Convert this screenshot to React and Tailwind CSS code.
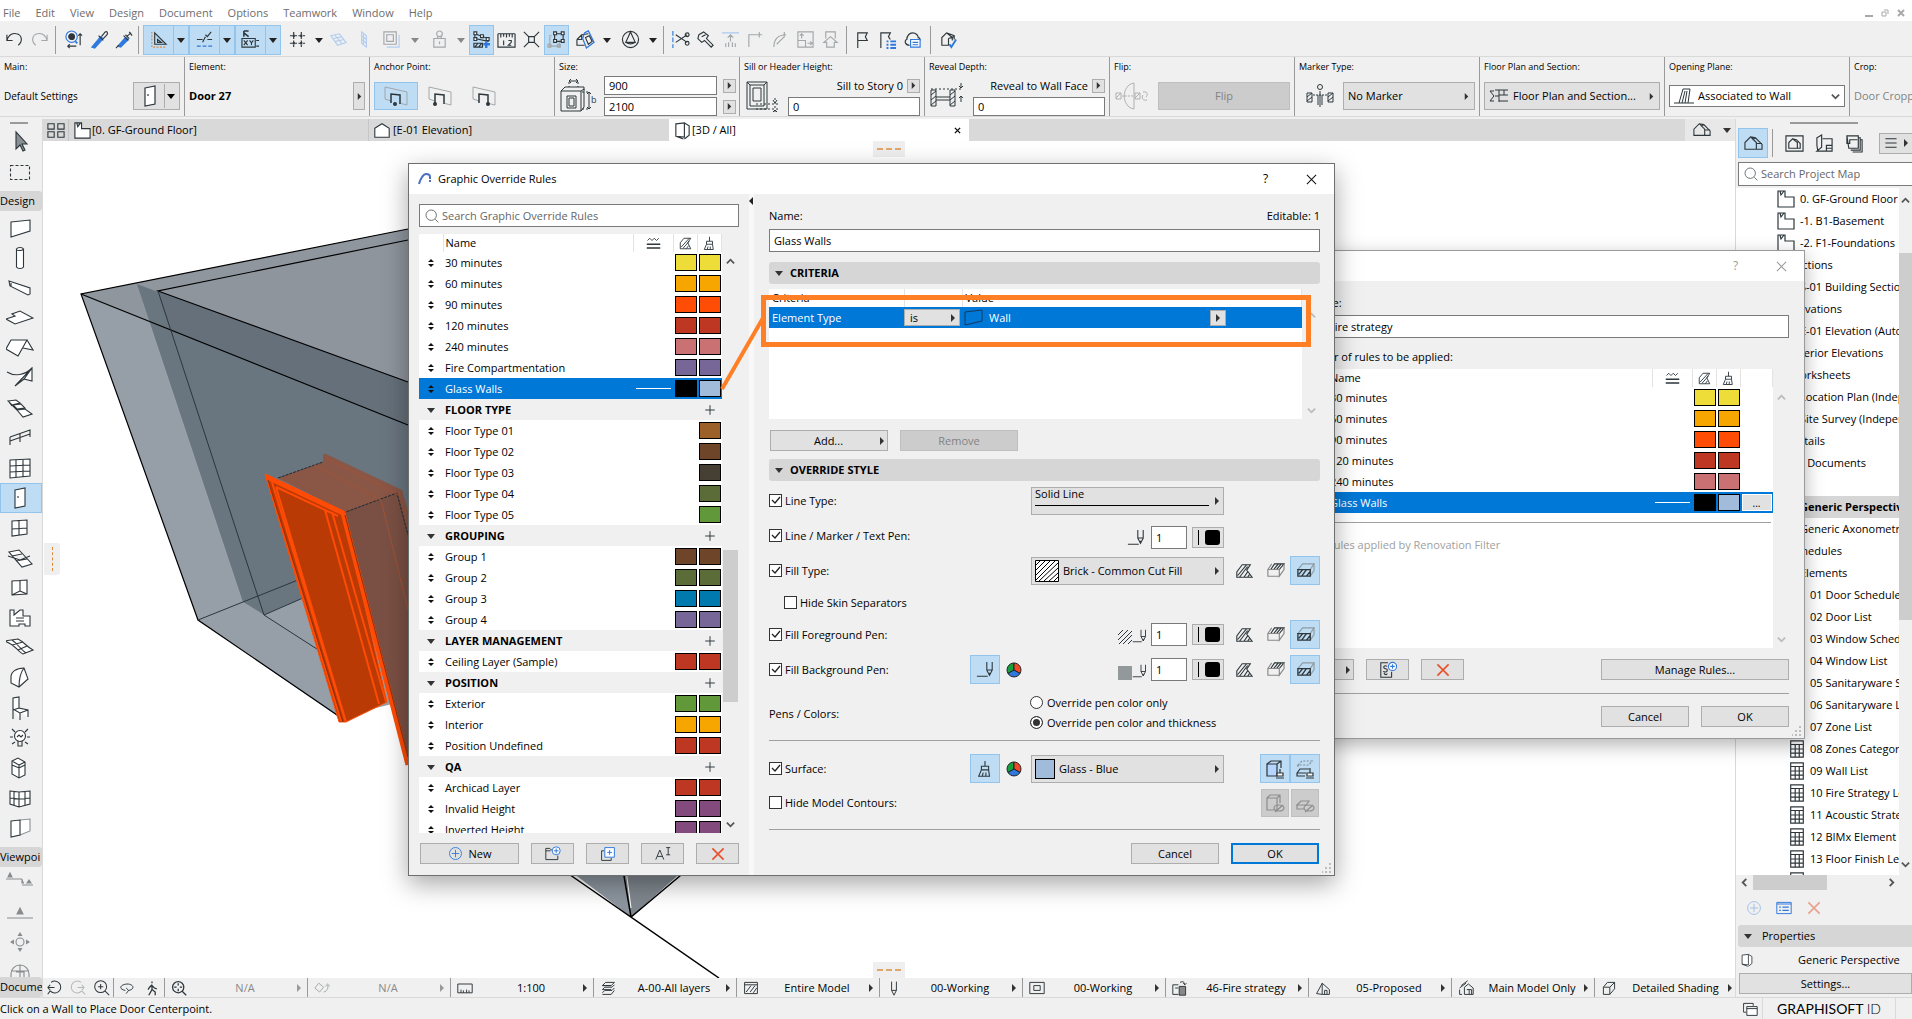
import { useId } from 'react'
import clsx from 'clsx'

const INK = '#2d363b'
const BLUE = '#2f78dd'
const DIM = '#a3a7a9'

// 20x20 glyphs used in toolbars, dialogs and the status strip
const ICONS = {
  undo: <path d="M2 5v6h6M2 11C4 5 8 3 12 4c6 1 7 8 2 12" />,
  redo: <path stroke={DIM} d="M18 5v6h-6M18 11C16 5 12 3 8 4c-6 1-7 8-2 12" />,
  find: <><circle cx="8" cy="7" r="6" stroke={BLUE} /><circle cx="8" cy="7" r="3" fill={INK} /><path stroke={BLUE} strokeWidth="2" d="M12 12l2 2" /><path d="M17 4v12M15 6l2-2 2 2M4 17h9M6 15l-2 2 2 2" /></>,
  pick: <><path d="M2 18l9-11 3 2-9 10z" fill={BLUE} stroke={BLUE} /><path d="M9 6l5 5M12 7l4-5c2-1 3 1 2 3l-4 4" /></>,
  inject: <><path d="M3 17l8-9 3 2-8 8z" fill={BLUE} stroke={BLUE} /><path d="M1 19l3-3M9 6l5 5M12 7l5-4M15 2l3 4M11 5l4 4" /></>,
  triangle: <><path d="M6 3v12h12zM9 10v3h4z" /><path stroke="#e08a3c" strokeDasharray="2 1.5" d="M3 2v16h15" /></>,
  guide: <><path d="M2 10h6M13 10h5M8 13l3-6M11 5l2 2 4-5" /><path stroke={BLUE} strokeDasharray="4 2" d="M2 17h16" /></>,
  coords: <><path strokeWidth="1.600" d="M3 1v6M3 1h5M3 3l5 4" /><path d="M1 9h14v9H1zM3 11l4 5M7 11l-4 5M9 11l2 2.500 2-2.500M11 13.500V16M16 11h3M16 17h3" /></>,
  grid: <><path d="M6 2v16M14 2v16M2 6h16M2 14h16" strokeDasharray="3 1.500" /><path strokeWidth="2.500" d="M5 6h2M13 6h2M5 14h2M13 14h2" /></>,
  planeH: <path stroke="#b3cdf0" d="M2 6l9-2 7 9-9 3zM5 9l9-2M7 12l9-2M6 5l8 10" />,
  planeV: <path stroke="#b3cdf0" d="M7 2l5 4v12l-5-4zM7 6l5 4M7 10l5 4M9 4v12" />,
  sheets: <><path stroke="#b3cdf0" d="M5 18h13V5" /><path stroke={DIM} d="M2 2h13v13H2zM5 5h7v7H5z" /></>,
  stamp: <path stroke={DIM} d="M4 9h12v9H4zM8 9V7M12 9V7M10 1a3 3 0 100 6 3 3 0 000-6M10 12v3" />,
  editsel: <><path d="M3 4l14 5v3L3 9z" /><path fill="#fff" d="M2 2h3v3H2zM9 5h3v3H9zM15 8h3v3h-3zM2 8h3v3H2z" /><path d="M2 14h9v4H2zM3 18l3-4M7 18l3-4" /><path stroke={BLUE} strokeWidth="2.500" d="M15 12v7M12 15h7" /></>,
  ruler: <path d="M1 4v14h18V4M4 4v4M7 4v3M10 4v4M13 4v3M16 4v4M1 4h18M7 11v5M12 11h3v2l-3 3h3" />,
  snap: <path d="M7 7h6v6H7zM2 2l5 5M18 2l-5 5M2 18l5-5M18 18l-5-5" />,
  group: <><path d="M8 4h9v8H8z" /><path fill="#fff" d="M7 2h3v3H7zM15 2h3v3h-3zM7 10h3v3H7zM15 10h3v3h-3z" /><path stroke={DIM} d="M3 7v10h10v-4M2 6h3M1 15h3v3H1zM11 15h3v3h-3z" /></>,
  rotbox: <><path d="M1 10l5-5 7-1M1 10v6h8M6 5v5H1" /><path stroke={BLUE} strokeWidth="1.300" d="M9 3l4-2 6 12-8 6-4-10z" /><path d="M10 8l4-2 3 6-4 3z" /></>,
  orbit: <><circle cx="10" cy="10" r="8.500" /><path d="M10 2l5 11H5zM5 13c3 2 7 2 10 0" /></>,
  split: <><path stroke={BLUE} d="M2 1v18" strokeDasharray="5 2" /><path d="M5 5l12 8M5 13l12-8" /><circle cx="17" cy="5" r="2" /><circle cx="17" cy="14" r="2" /></>,
  adjust: <path d="M3 5l5-3 5 4-2 3 7 7-2 2-7-7-3 2-4-4z M6 7l4-2" />,
  trim: <><path stroke="#b3cdf0" strokeWidth="1.500" d="M1 3h18" /><path stroke={DIM} d="M10 12V5M7 8l3-3 3 3M5 18v-4M8 18v-5M12 18v-5M15 18v-4" /></>,
  corner: <path stroke={DIM} d="M3 18V5h14M14 2v6" />,
  fillet: <path stroke={DIM} d="M3 18C3 10 7 5 16 5M14 2v6M6 15l8-8" />,
  resize: <path stroke={DIM} d="M2 2h16v16H2zM2 11h8v7M6 9V4M4 6l2-2 2 2M12 14h5M15 12l2 2-2 2" />,
  upbox: <path stroke={DIM} d="M10 7l7 6h-3v5H6v-5H3zM5 9V2h10v7" />,
  flag: <path d="M5 19V3h10l-2 4 2 4H5" />,
  flaglist: <><path d="M3 19V3h10l-2 4 2 3" /><path stroke={BLUE} strokeWidth="2" d="M9 12h2M13 12h6M9 15.500h2M13 15.500h6M9 19h2M13 19h6" /></>,
  cloudlist: <><path d="M7 16c-5 0-6-5-3-6 0-4 3-7 6-7 4 0 6 3 6 5 2 0 2 2 2 3" /><path stroke={BLUE} fill="#fff" d="M8 10h10v8H8z" /><path stroke={BLUE} d="M10 13h6M10 15.500h6" /></>,
  housecheck: <><path d="M3 16V8l5-5 8 3v4M3 8v8h7V9M8 3l6 5v3M10 9l6-2" /><path stroke={BLUE} strokeWidth="2" d="M11 15l2 3 5-8" /></>,
  house3d: <path d="M1 16V9l6-6 6 6v7zM7 3l5 1 7 7v5h-6M13 10h6M12 4L9 6" />,
  housebox: <><path d="M1 2h18v16H1z" /><path d="M4 15V9l4-4 5 4v6zM8 5l4 1 4 4v5h-3" /></>,
  layout: <path d="M3 18L2 12V4l5-3v13l-5 4h16V5H8M12 18v-6h6M12 15h6" />,
  publish: <path d="M2 2h12v13H4zM2 2v8h3V6h8M14 4h2v13H6M16 6h2v13H8" />,
  tiles: <path d="M1 3h7v6H1zM12 3h7v6h-7zM1 12h7v6H1zM12 12h7v6h-7z" />,
  story: <path fill="#fff" d="M2 2h7v6h9v10H2zM4 2l1 4 3-4" />,
  elevation: <path fill="#fff" d="M2 8l8-5 8 5v10H2z" />,
  box3d: <path fill="#fff" d="M3 3l9-1v15l-9-1zM12 2l5 3v10l-5 4M3 16l8 3" />,
  hatch: <path d="M3 17V9l5-6h9l-4 6 4 8zM4 15L15 3M7 16l8-9M11 17l3-4" />,
  lines: <><path d="M2 6l3-3 3 3 3-3 3 3 3-3" /><path strokeWidth="2" d="M1 11h18M1 16h18" /></>,
  brush: <path d="M10 1v6M6 7h8v4H6zM6 11l-3 7h12l-1-7M7 18l1-4M11 18v-4" />,
  pencil: <path d="M1 17h12M12 1v9l3 6 3-6V1M12 10h6M15 16v-3" />,
  pentool: <path d="M7 2v11l3 6 3-6V2M7 13h6" />,
  fillA: <path d="M2 17V11l6-8h9l-4 6 6 8zM3 15L13 3M5 17l9-12M10 17l4-6M14 17l2-3" />,
  fillB: <><path d="M5 9L9 3h10l-5 6zM8 9l5-6M11 9l5-6" strokeWidth="1.200" /><path stroke="#888" d="M2 9h12v7H2zM14 9v7l5-7V3M2 9l4-6" /></>,
  fillC: <><path stroke="#8e9ba3" d="M2 9l5-6h12l-4 6zM15 16l4-6V3" /><path d="M2 9h13v7H2zM3 14l4-5M6 16l5-7M11 16l4-5" strokeWidth="1.400" /></>,
  surfA: <><path fill="#b5d5ff" d="M2 5h10v12H2z" /><path fill="none" d="M2 5l4-3h10v7M12 5l4-3" /><path fill="#fff" d="M15 10v4M12 14h6v3h-6zM11 19h8" /></>,
  surfB: <><path stroke="#7f929c" strokeDasharray="2 1.500" d="M3 6l4-4h10l-3 4zM3 6v3" /><path d="M2 14l3-4h9M2 14v3h8M2 14h9" /><path fill="#fff" d="M15 9v5M12 14h6v3h-6zM11 19h8" /></>,
  hideA: <path stroke="#8d8d8d" d="M2 5h10v12H2zM2 5l3-3h10v8M12 5l3-3M10 19l8-7M14 12a5 3 0 100 6 5 3 0 000-6" />,
  hideB: <path stroke="#8d8d8d" d="M2 12l4-4h8l-3 4zM2 12v4h7M10 19l8-7M14 12a5 3 0 100 6 5 3 0 000-6" />,
  plus: <path d="M10 4v12M4 10h12" />,
  addcircle: <g stroke={BLUE}><circle cx="10" cy="10" r="8" /><path d="M10 5v10M5 10h10" /></g>,
  folderadd: <><path d="M11 5H8L6 3H1v14h15v-5M1 6h6" /><g stroke={BLUE} fill="#fff"><circle cx="14" cy="6" r="5" /><path d="M14 3v6M11 6h6" /></g></>,
  dupe: <><path d="M5 6H2v12h12v-3" /><path stroke={BLUE} fill="#fff" d="M6 2h12v12H6z" /><path stroke={BLUE} d="M12 5v6M9 8h6" /></>,
  rename: <path d="M1 17L6 5l5 12M3 13h6M14 2h5M14 11h5M16.500 2v9" />,
  remove: <path stroke="#e8502c" strokeWidth="2" d="M3 3l14 14M17 3L3 17" />,
  paragraph: <><path d="M10 2H2v16h12v-6M9 6c-3-2-5 1-3 2s4 1 3 3-4 1-4 0M6 13c-1 2 3 3 3 1" /><g stroke={BLUE} fill="#fff"><circle cx="15" cy="6" r="4.500" /><path d="M15 3.500v5M12.500 6h5" /></g></>,
  search: <><circle cx="9" cy="9" r="6.500" /><path d="M14 14l4 4" /></>,
  burger: <path strokeWidth="1.600" d="M2 4h16M2 10h16M2 16h16" />,
  sheetgrid: <path strokeWidth="1.300" fill="#fff" d="M3 1h14v18H3zM8 5v14M12.500 5v14M3 5h14M3 10h14M3 14.500h14" />,
  list: <><path stroke={BLUE} d="M1 3h18v14H1zM1 5h18" /><path stroke={BLUE} strokeWidth="1.500" d="M4 9h2M8 9h8M4 13h2M8 13h8" /></>,
  stack: <path fill="#fff" d="M2 3h12v3M2 3v11h3M6 7h13v11H6zM6 9.500h13" />,
  zoomback: <path d="M2 10h8M2 10l3-3M2 10l3 3M6 4a7 7 0 11-1 10M5 14l-3 4" />,
  zoomfwd: <path stroke="#b5b7b8" d="M18 10h-8M18 10l-3-3M18 10l-3 3M14 4a7 7 0 10 1 10M15 14l4 4" />,
  zoomin: <path d="M9 2a7 7 0 100 14A7 7 0 009 2M14 14l5 5M9 6v6M6 9h6" />,
  orbit2: <path d="M8 13c-8-1-8-7 2-8 9 0 10 7 2 8M12 13l-3-3M12 13l-3 4" />,
  walk: <path d="M10 2v2M10 6l-3 3-2 3M10 6v6l-4 7M10 12l4 3v4M10 7l3 3 3 1" strokeWidth="1.600" />,
  zoomfit: <path d="M9 2a7 7 0 100 14A7 7 0 009 2M14 14l5 5M9 4v3M9 11v3M4 9h3M11 9h3" strokeWidth="1.600" />,
  rotate: <path stroke={DIM} d="M6 4l6 5-5 6-6-5zM12 15c5-1 6-5 5-9M14 8l3-3 3 3" />,
  scale: <path d="M1 5h18v11H1zM5 16v-4M8 16v-3M12 16v-4M15 16v-3" />,
  layers: <path d="M3 7l4-4h11l-4 4zM3 12l3-3h9l3-3M3 16l3-3h9l3-3M3 7h11M3 12h11M3 18h11l4-5" />,
  model: <path d="M2 3h16v14H2zM2 6h16M4 15l6-8M9 15l6-8M13 16l4-6" />,
  frame: <path d="M1 3h18v14H1zM6 7h8v6H6z" />,
  override: <><path d="M8 6H1v12h7M4 10h4M10 3c4-2 6 0 6 3M14 4l2 2 2-2" /><path fill="#888" d="M9 8h8v11H9z" /></>,
  reno: <path d="M2 17l7-13v14zM9 4l9 8v6H9M12 18v-5h3v5" />,
  design: <path d="M2 10l8-6M4 7l8-6M8 9l5-4 6 5v8H8zM11 12h6v6M14 12v6M2 12v6h3" />,
  shading: <path d="M3 9h8v9H3zM3 9l5-6h9l-6 6M17 3v8l-6 7" />,
}

function Icon({ name, className = 'size-5' }) {
  return (
    <svg viewBox="0 0 20 20" fill="none" stroke={INK} strokeWidth="1.2" className={clsx('shrink-0', className)} aria-hidden="true">
      {ICONS[name]}
    </svg>
  )
}

// 28x28 glyphs of the left toolbox
const TOOLS = {
  arrow: <path fill="#8a8f92" d="M10 4v17l4-4 3 6 2-1-3-6h5z" />,
  marquee: <path strokeDasharray="3 2" d="M4.500 7.500h19v14h-19z" />,
  wall: <path fill="#fff" d="M5 8l19-2v11L5 23z" />,
  column: <path fill="#fff" d="M10.500 5v18c1 2 6 2 7 0V5c-1-2-6-2-7 0s6 2 7 0" />,
  beam: <path fill="#fff" d="M3 7l21 7v6l-2 1L4 12zM5 12V9" />,
  slab: <path fill="#fff" d="M0 15l9-3-3-2 8-3 13 7-18 6z" />,
  roof: <path fill="#fff" d="M5 6h16l-9 16-12-7zM21 6l6 10-10-2" />,
  shell: <path fill="#fff" d="M1 8c8 5 18 3 25-4v13l-8-2M26 4l-8 11-9 7z" />,
  stair: <path fill="#fff" d="M2 7l8-1 4 3-8 2zM7 11l8-1 4 4-8 1zM11 16l8-1 7 5-9 3zM6 11l5 5M3 8l3 4" />,
  railing: <path d="M4 13l20-7v7M4 13v8M14 10v8M4 17l20-7" />,
  curtain: <path fill="#fff" d="M4 6l20-1v17L4 24zM10 6v17M17 5v18M4 12l20-1M4 18l20-1" />,
  door: <path fill="#fff" d="M9 6l10-2v18L9 24zM12 14v-2" />,
  window: <path fill="#fff" d="M6 7l15-1v14L6 22zM13 6v15M6 15l15-1" />,
  skylight: <path fill="#fff" d="M3 8l10-2 13 14-10 3zM6 12l10-2M10 17l11-2M2 12l12 4 10-4" />,
  opening: <path fill="#fff" d="M6 7l15-1v14L6 21zM14 6v11l-8 4M14 17l7 3" />,
  zone: <path fill="#fff" d="M4 6h4v5l6-5h3v6h7v10h-5v-2h-6v2H4zM10 14h8M10 17h8" />,
  mesh: <path fill="#fff" d="M-2 7l14-2c6 3 9 8 15 11l-10 4C12 18 8 9-2 7zM6 6c6 4 8 9 14 13M6 11l11-3M12 16l9-4" />,
  morph: <path fill="#fff" d="M5 13c0-5 5-9 13-9l4 11-9 8-8-4zM18 4c-4 5-5 12-5 19" />,
  chair: <path fill="#fff" d="M7 15V4l6-1v11l9 2v7M7 15v10M7 15l7 4v7M14 19l8-3M13 14l-6 2" />,
  lamp: <><circle cx="14" cy="12" r="5.500" fill="#fff" /><path d="M12 17v5h4v-5M11 13l2-2 2 2 2-2M4 13h3M21 13h3M6 5l3 3M22 5l-3 3M6 20l3-2M22 20l-3-2" /></>,
  object: <path fill="#fff" d="M6 7l6-3 7 4v13l-6 3-7-4zM6 7l7 4v13M13 11l6-3M6 11l7 3 6-3" />,
  cwall: <path fill="#fff" d="M4 7l9 1 11-1v13l-11 3-9-3zM13 8v15M8 8v13M19 8v13M4 14l9 1 11-1" />,
  panel: <><path stroke="#8c9295" fill="#fff" d="M14 6l10-1v12l-10 4" /><path fill="#fff" d="M5 7l9-1v15l-9 2z" /></>,
  section: <path stroke="#878c8f" fill="#878c8f" d="M0 11h16M16 11v4h2M16 17h11M2 9l2-4 2 4zM21 15l2-3 2 3z" />,
  elev: <path stroke="#878c8f" fill="#878c8f" d="M1 20h26M11 16l3-6 3 6z" />,
  camera: <><circle cx="14" cy="14" r="4" stroke="#878c8f" /><path stroke="none" fill="#878c8f" d="M11.500 8h5L14 4zM11.500 20h5L14 24zM8 11.500v5L4 14zM20 11.500v5L24 14z" /></>,
  detail: <path stroke="#878c8f" d="M5 20v-4a9 9 0 0118 0v4M5 13h18M14 7v12M10 14h8v5" />,
}

function Tool({ name, active }) {
  return (
    <button
      aria-label={name}
      className={clsx('flex h-[30px] w-full shrink-0 items-center justify-center pr-[3px]', active && 'border border-[#92c4ec] bg-[#bedcf3]')}
    >
      <svg viewBox="0 0 28 28" fill="none" stroke={INK} strokeWidth="1.1" className="size-7">{TOOLS[name]}</svg>
    </button>
  )
}

function Tri({ dir = 'right', className = 'fill-[#333]' }) {
  const d = { right: 'M2 0v8l4-4z', down: 'M0 2h8L4 7z', left: 'M6 0v8L2 4z' }[dir]
  return <svg viewBox="0 0 8 8" className={clsx('size-2 shrink-0', className)} aria-hidden="true"><path d={d} /></svg>
}

function Chevron({ turn = '', className = 'stroke-[#555]' }) {
  return (
    <svg viewBox="0 0 10 10" fill="none" strokeWidth="2" className={clsx('size-[9px] shrink-0', turn, className)} aria-hidden="true">
      <path d="M1 7l4-4 4 4" />
    </svg>
  )
}

const BTN = 'flex items-center justify-center border border-[#adadad] bg-[#e1e1e1]'
const BOX = 'border border-[#7a7a7a] bg-white px-1 outline-none'
const ON = 'border border-[#92c4ec] bg-[#bedcf3]'

const MENUS = ['File', 'Edit', 'View', 'Design', 'Document', 'Options', 'Teamwork', 'Window', 'Help']

function MenuBar() {
  return (
    <nav className="flex h-[21px] shrink-0 items-end gap-[15px] bg-white px-[3px] text-[#6d6d6d]">
      {MENUS.map((m) => <button key={m}>{m}</button>)}
      <div className="mb-1 ml-auto flex items-center gap-2 pr-1 text-[#a9a9a9]">
        <button aria-label="Minimize" className="mt-1.5 h-[2px] w-2 bg-current" />
        <button aria-label="Restore">
          <svg viewBox="0 0 8 8" className="size-2" fill="none" stroke="currentColor"><path d="M1 3h4v4H1zM3 1h4v4" /></svg>
        </button>
        <button aria-label="Close">
          <svg viewBox="0 0 8 8" className="size-2" stroke="currentColor" strokeWidth="2"><path d="M1 1l6 6M7 1L1 7" /></svg>
        </button>
      </div>
    </nav>
  )
}

function TB({ name, w = 'w-[25px]', on }) {
  return (
    <button aria-label={name} className={clsx('flex h-[30px] shrink-0 items-center justify-center', w, on && ON)}>
      <Icon name={name} className="size-[19px]" />
    </button>
  )
}

function Drop({ w = 'w-3', dim }) {
  return (
    <button aria-label="Options" className={clsx('flex h-[30px] shrink-0 items-center justify-center', w)}>
      <Tri dir="down" className={dim ? 'fill-[#888]' : 'fill-[#222]'} />
    </button>
  )
}

function Pair({ name }) {
  return (
    <div className={clsx('flex', ON)}>
      <button aria-label={name} className="flex h-7 w-[29px] items-center justify-center"><Icon name={name} className="size-[19px]" /></button>
      <button aria-label={`${name} options`} className="flex h-7 w-[15px] items-center justify-center border-l border-[#92c4ec]">
        <Tri dir="down" className="fill-[#222]" />
      </button>
    </div>
  )
}

const Sep = ({ m = 'mx-[3px]' }) => <div className={clsx('h-7 w-px shrink-0 bg-[#9a9a9a]', m)} />

function Toolbar() {
  return (
    <div className="flex h-9 shrink-0 items-center border-b border-[#d9d9d9] pt-0.5 pl-0.5">
      <TB name="undo" /><TB name="redo" /><Sep />
      <TB name="find" w="w-7" /><TB name="pick" /><TB name="inject" />
      <Sep m="ml-px mr-1" />
      <Pair name="triangle" /><Pair name="guide" /><Pair name="coords" />
      <TB name="grid" w="w-8" /><Drop />
      <TB name="planeH" w="w-[26px]" /><TB name="planeV" w="w-[26px]" />
      <TB name="sheets" w="w-7" /><Drop w="w-5" dim />
      <TB name="stamp" w="w-7" /><Drop w="w-4" dim />
      <TB name="editsel" on /><TB name="ruler" /><TB name="snap" /><TB name="group" on />
      <TB name="rotbox" w="w-8" /><Drop />
      <TB name="orbit" w="w-[34px]" /><Drop />
      <Sep m="mx-1" />
      {['split', 'adjust', 'trim', 'corner', 'fillet', 'resize', 'upbox'].map((n) => <TB key={n} name={n} />)}
      <Sep />
      {['flag', 'flaglist', 'cloudlist'].map((n) => <TB key={n} name={n} />)}
      <Sep m="mx-[5px]" />
      <TB name="housecheck" />
    </div>
  )
}

function InfoCell({ title, children }) {
  return (
    <section className="w-[185px] shrink-0 border-r border-[#9a9a9a] px-1 last:border-r-0">
      <h2 className="h-[19px] pt-0.5 text-[9px] leading-4">{title}</h2>
      <div className="flex h-10 items-center">{children}</div>
    </section>
  )
}

function Anchor({ on, dot }) {
  return (
    <button aria-label="Anchor" className={clsx('flex h-7 w-11 items-center justify-center', on && ON)}>
      <svg viewBox="0 0 26 24" className="h-6 w-[26px]" fill="none" stroke={INK}>
        <path stroke={DIM} d="M2 15V3l22 5v13l-6-1.500M2 15l6 2" />
        <path strokeWidth="1.500" d="M8 19v-9l9 1v9" />
        <circle cx={dot} cy="20" r="2" fill={INK} stroke="none" />
      </svg>
    </button>
  )
}

const Step = () => <button aria-label="More" className={clsx(BTN, 'h-3.5 w-[13px] shrink-0')}><Tri className="size-[7px] fill-[#333]" /></button>

function InfoBox() {
  return (
    <div className="flex h-[60px] shrink-0 overflow-hidden border-b border-[#d9d9d9]">
      <InfoCell title="Main:">
        <span className="grow text-[10px]">Default Settings</span>
        <button className={clsx(BTN, 'h-7 w-[47px]')} aria-label="Door settings">
          <svg viewBox="0 0 28 28" className="size-7" fill="#fff" stroke={INK} strokeWidth="1.2">{TOOLS.door}</svg>
          <span className="h-6 w-px bg-[#adadad]" />
          <Tri dir="down" className="mx-0.5" />
        </button>
      </InfoCell>
      <InfoCell title="Element:">
        <b className="grow">Door 27</b>
        <button className={clsx(BTN, 'h-7 w-3')} aria-label="Favorites"><Tri className="size-[7px] fill-[#333]" /></button>
      </InfoCell>
      <InfoCell title="Anchor Point:">
        <Anchor on dot={12} /><Anchor dot={8} /><Anchor dot={17} />
      </InfoCell>
      <InfoCell title="Size:">
        <svg viewBox="0 0 38 36" className="h-9 w-[38px] shrink-0" fill="none" stroke={INK}>
          <path d="M2 13h20v20H2zM2 13l4-4h19v3M22 13l3-2v18l-3 4M8 18h9v12H8zM10 20h5v8h-5zM10 3h9M12 1l-2 2 2 2M17 1l2 2-2 2M30 14v17M28 16l2-2 2 2M28 29l2 2 2-2" />
          <path strokeDasharray="2 2" d="M10 4v5M19 4v5M23 14h7M23 31h7" />
          <text x="32" y="25" fontSize="9" stroke="none" fill={INK}>b</text>
        </svg>
        <div className="ml-[7px] flex grow flex-col gap-0.5">
          {['900', '2100'].map((v) => (
            <div key={v} className="flex items-center gap-1.5">
              <input aria-label="Size" defaultValue={v} className={clsx(BOX, 'h-[19px] w-[113px]')} />
              <Step />
            </div>
          ))}
        </div>
      </InfoCell>
      <InfoCell title="Sill or Header Height:">
        <svg viewBox="0 0 36 32" className="h-8 w-9 shrink-0" fill="none" stroke={INK}>
          <path d="M3 2h20v27H3zM6 5h14v21H6zM9 8h8v13H9zM3 2l3 3M23 2l-3 3" />
          <path strokeDasharray="2 2" d="M12 24h22M12 29h22M31 18v14" />
          <path d="M29 20l2 3 2-3M29 32l2-2 2 2" />
        </svg>
        <div className="flex grow flex-col gap-0.5 pl-2">
          <div className="flex h-[19px] items-center justify-end gap-1"><span>Sill to Story 0</span><Step /></div>
          <input aria-label="Sill height" defaultValue="0" className={clsx(BOX, 'h-[19px] w-full')} />
        </div>
      </InfoCell>
      <InfoCell title="Reveal Depth:">
        <svg viewBox="0 0 36 32" className="h-8 w-9 shrink-0" fill="none" stroke={INK}>
          <path d="M2 10h5v16H2zM21 10h5v16h-5zM7 17h14M7 20h14M2 15l5-4M2 20l5-4M2 25l5-4M21 15l5-4M21 20l5-4M21 25l5-4" />
          <path strokeDasharray="2 2" d="M2 9h31" />
          <path d="M32 3v5M30 6l2 2 2-2M32 22v-6M30 18l2-2 2 2" />
        </svg>
        <div className="flex grow flex-col gap-0.5 pl-2">
          <div className="flex h-[19px] items-center justify-end gap-1"><span>Reveal to Wall Face</span><Step /></div>
          <input aria-label="Reveal depth" defaultValue="0" className={clsx(BOX, 'h-[19px] w-full')} />
        </div>
      </InfoCell>
      <InfoCell title="Flip:">
        <svg viewBox="0 0 36 30" className="mr-2 h-[30px] w-9 shrink-0" fill="none" stroke="#b0b0b0">
          <path d="M20 2C7 4 7 26 20 28zM2 12h5v6H2zM21 12h5v6h-5zM2 17l5-5M21 17l5-5M29 11c5-1 5 3 3 5M33 19c-4 1-6-2-4-5" />
          <path strokeDasharray="2 1" d="M8 15h12" />
        </svg>
        <button disabled className="h-7 grow border border-[#bfbfbf] bg-[#cccccc] text-[#838383]">Flip</button>
      </InfoCell>
      <InfoCell title="Marker Type:">
        <svg viewBox="0 0 30 26" className="mr-2 ml-1.5 h-[26px] w-[30px] shrink-0" fill="none" stroke={INK}>
          <path d="M2 10h5v9H2zM23 10h5v9h-5zM2 14l5-4M2 18l5-4M23 14l5-4M23 18l5-4M13 12v10M17 12v10M15 8v16" />
          <path strokeDasharray="2 1" d="M8 12h14" /><circle cx="15" cy="4" r="2.500" />
        </svg>
        <button className={clsx(BTN, 'h-7 grow px-1')}><span className="grow text-left">No Marker</span><Tri className="size-[7px] fill-[#333]" /></button>
      </InfoCell>
      <InfoCell title="Floor Plan and Section:">
        <button className={clsx(BTN, 'h-7 w-full gap-1 px-1')}>
          <svg viewBox="0 0 20 16" className="h-4 w-5 shrink-0" fill="none" stroke={INK}><path d="M1 3h4M1 3l4 5-4 5M1 13h4M6 2h13M10 2v12M15 2v5h4M6 8h4M10 13h9M15 7h-5" /></svg>
          <span className="grow text-left whitespace-nowrap">Floor Plan and Section...</span>
          <Tri className="size-[7px] fill-[#333]" />
        </button>
      </InfoCell>
      <InfoCell title="Opening Plane:">
        <div className="flex h-[22px] w-full items-center border border-[#7a7a7a] bg-white px-1">
          <svg viewBox="0 0 20 16" className="h-4 w-5 shrink-0" fill="none" stroke={INK}><path d="M0 15h20M5 15L9 1h7l-2 14M8 15l3-12M11 15l2-12" /></svg>
          <select aria-label="Opening plane" className="grow appearance-none bg-transparent pl-1 outline-none">
            <option>Associated to Wall</option>
          </select>
          <Chevron turn="rotate-180" />
        </div>
      </InfoCell>
      <InfoCell title="Crop:">
        <span className="whitespace-nowrap text-[#838383]">Door Cropping</span>
      </InfoCell>
    </div>
  )
}

const DESIGN_TOOLS = ['wall', 'column', 'beam', 'slab', 'roof', 'shell', 'stair', 'railing', 'curtain', 'door', 'window', 'skylight', 'opening', 'zone', 'mesh', 'morph', 'chair', 'lamp', 'object', 'cwall', 'panel']

const ToolHead = ({ children }) => (
  <h3 className="h-5 shrink-0 overflow-hidden rounded-r-[3px] bg-[#d6d6d6] leading-5 whitespace-nowrap">{children}</h3>
)

function Toolbox() {
  return (
    <aside className="flex w-[43px] shrink-0 flex-col overflow-hidden border-r border-[#d9d9d9]">
      <div className="mt-[3px] mb-[3px] ml-2.5 h-0.5 w-[18px] shrink-0 bg-[#9a9a9a]" />
      <Tool name="arrow" />
      <Tool name="marquee" />
      <div className="h-1 shrink-0" />
      <ToolHead>Design</ToolHead>
      <div className="h-0.5 shrink-0" />
      {DESIGN_TOOLS.map((t) => <Tool key={t} name={t} active={t === 'door'} />)}
      <div className="h-1 shrink-0" />
      <ToolHead>Viewpoi</ToolHead>
      <div className="flex min-h-0 grow flex-col overflow-hidden">
        {['section', 'elev', 'camera', 'detail'].map((t) => <Tool key={t} name={t} />)}
      </div>
      <ToolHead>Docume</ToolHead>
    </aside>
  )
}

function TabBar() {
  return (
    <div className="flex h-[22px] shrink-0 items-stretch bg-[#d9d9d9]">
      <button aria-label="Tab overview" className="flex w-[26px] items-center justify-center border-r border-[#c6c6c6]"><Icon name="tiles" className="size-[18px]" /></button>
      <button className="flex w-[300px] items-center border-r border-[#c6c6c6] px-1"><Icon name="story" className="size-[19px]" />[0. GF-Ground Floor]</button>
      <button className="flex w-[300px] items-center gap-0.5 px-1"><Icon name="elevation" className="size-[18px]" />[E-01 Elevation]</button>
      <div className="flex w-[300px] items-center bg-white px-1">
        <button className="flex grow items-center"><Icon name="box3d" className="size-[19px]" />[3D / All]</button>
        <button aria-label="Close tab" className="px-1">
          <svg viewBox="0 0 8 8" className="size-[7px]" stroke="#111" strokeWidth="1.6"><path d="M1 1l6 6M7 1L1 7" /></svg>
        </button>
      </div>
      <button aria-label="Navigator views" className="ml-auto flex w-[50px] items-center justify-between bg-[#e8e8e8] pr-1 pl-2">
        <Icon name="house3d" className="size-[18px]" /><Tri dir="down" />
      </button>
    </div>
  )
}

// Perspective of the glass wall with the selected door; drawn in canvas coordinates
function Scene() {
  return (
    <svg className="absolute top-0 left-0 h-[837px] w-[700px]" viewBox="43 141 700 837" fill="none">
      <path fill="#969fa8" d="M81 294L408 229V700L340 717 198 620z" />
      <path fill="#8f969e" d="M81 294L408 229V425z" />
      <path fill="#69757f" d="M137 284l21 8 250 90v210L303 598l-39 17-21-13z" />
      <path fill="#65707a" d="M158 291l250 91v43L170 330z" />
      <path fill="#8f959d" d="M158 291L408 240V382z" />
      <path fill="#969fa8" d="M198 620l45-18 21 13 39-17 20 54 20 68z" />
      <g stroke="#000" strokeWidth="1.2">
        <path d="M408 229L81 294 198 620 340 717" />
        <path d="M408 240L158 291 408 382M81 294L408 425" />
      </g>
      <path stroke="#2c363e" d="M158 291L264 615 303 598M198 620L303 578M264 615L320 651" />
      <path fill="#8a5646" d="M278 478l45-16v-8h3l76 36 7 25v250L343 511z" />
      <path fill="#7b5044" d="M343 513l54-20 11 40v230z" />
      <path stroke="#1f2a33" strokeDasharray="3 1" d="M278 478L323 462M343 513l54-20 11 42" />
      <path stroke="#a0543a" d="M314 465l67 35 27 110M326 458l73 37" />
      <path fill="#b93a04" stroke="#ff5208" d="M265 474l78 37 44 191-41 20h-7z" />
      <path stroke="#ff4b05" strokeWidth="5" d="M267 477L343 513 408 765" />
      <path stroke="#ff4b05" strokeWidth="2" d="M266 475L341 721M271 479L345 720M276 487l62 29M325 510L379 704M332 512L386 702M276 487L346 722" />
      <path stroke="#8c2f08" d="M268 480L343 722M345 515L408 757" />
      <path fill="#8d969f" d="M569 870L631 917 624 870z" />
      <path fill="#7f878e" d="M624 870L631 917 684 870z" />
      <path stroke="#000" strokeWidth="1.500" d="M563 870L631 917 687 870M623 870L631 917 719 978" />
      <path stroke="#fff" d="M626 870L631 908" />
    </svg>
  )
}

function Canvas() {
  return (
    <main className="relative min-h-0 grow overflow-hidden bg-white">
      <Scene />
      <div className="absolute top-0 left-1/2 -ml-4 flex h-4 w-8 items-center bg-[#efefef] px-1"><i className="w-full border-t-2 border-dashed border-[#e3a56c]" /></div>
      <div className="absolute bottom-0 left-1/2 -ml-4 flex h-4 w-8 items-center bg-[#efefef] px-1"><i className="w-full border-t-2 border-dashed border-[#e3a56c]" /></div>
      <div className="absolute top-[402px] left-px flex h-8 w-4 justify-center rounded-r-[3px] bg-[#efefef] py-1"><i className="h-full border-l border-dashed border-[#e08a3c]" /></div>
    </main>
  )
}

const QUICK = [
  { icon: 'zoomfit', text: 'N/A', dim: true },
  { icon: 'rotate', text: 'N/A', dim: true },
  { icon: 'scale', text: '1:100' },
  { icon: 'layers', text: 'A-00-All layers' },
  { icon: 'model', text: 'Entire Model' },
  { icon: 'pentool', text: '00-Working' },
  { icon: 'frame', text: '00-Working' },
  { icon: 'override', text: '46-Fire strategy' },
  { icon: 'reno', text: '05-Proposed' },
  { icon: 'design', text: 'Main Model Only' },
  { icon: 'shading', text: 'Detailed Shading' },
]

function QuickOptions() {
  return (
    <div className="flex h-[19px] shrink-0 items-center overflow-hidden">
      <div className="flex h-full w-[71px] shrink-0 items-center justify-around border-r border-[#9a9a9a]">
        {['zoomback', 'zoomfwd', 'zoomin'].map((n) => <button key={n} aria-label={n}><Icon name={n} className="size-[17px]" /></button>)}
      </div>
      <div className="flex h-full w-[51px] shrink-0 items-center justify-around border-r border-[#9a9a9a]">
        {['orbit2', 'walk'].map((n) => <button key={n} aria-label={n}><Icon name={n} className="size-4" /></button>)}
      </div>
      {QUICK.map((q) => (
        <button key={q.icon} className={clsx('flex h-full w-[143px] shrink-0 items-center border-r border-[#9a9a9a] pr-1 pl-1.5 last:border-r-0', q.dim && 'text-[#8a8a8a]')}>
          <Icon name={q.icon} className="size-4" />
          <span className="grow pl-2 text-center whitespace-nowrap">{q.text}</span>
          <Tri className={q.dim ? 'fill-[#999]' : 'fill-[#333]'} />
        </button>
      ))}
    </div>
  )
}

const MAP = [
  ['story', 2, '0. GF-Ground Floor'], ['story', 2, '-1. B1-Basement'], ['story', 2, '-2. F1-Foundations'],
  ['folder', 1, 'Sections'], ['', 2, 'S-01 Building Section'], ['folder', 1, 'Elevations'],
  ['', 2, 'E-01 Elevation (Auto-rebuild)'], ['folder', 1, 'Interior Elevations'], ['folder', 1, 'Worksheets'],
  ['', 2, 'Location Plan (Independent)'], ['', 2, 'Site Survey (Independent)'], ['folder', 1, 'Details'],
  ['folder', 1, '3D Documents'], ['', 1, ''], ['bold', 2, 'Generic Perspective'], ['', 2, 'Generic Axonometry'],
  ['folder', 1, 'Schedules'], ['', 2, 'Elements'], ['sheetgrid', 3, '01 Door Schedule'], ['sheetgrid', 3, '02 Door List'],
  ['sheetgrid', 3, '03 Window Schedule'], ['sheetgrid', 3, '04 Window List'], ['sheetgrid', 3, '05 Sanitaryware Schedule'],
  ['sheetgrid', 3, '06 Sanitaryware List'], ['sheetgrid', 3, '07 Zone List'], ['sheetgrid', 3, '08 Zones Categories'],
  ['sheetgrid', 3, '09 Wall List'], ['sheetgrid', 3, '10 Fire Strategy Legend'], ['sheetgrid', 3, '11 Acoustic Strategy'],
  ['sheetgrid', 3, '12 BIMx Element Schedule'], ['sheetgrid', 3, '13 Floor Finish Legend'], ['sheetgrid', 3, ''],
]
const INDENT = { 1: 'pl-[31px]', 2: 'pl-[41px]', 3: 'pl-[52px]' }

function Navigator() {
  return (
    <aside className="flex w-[177px] shrink-0 flex-col overflow-hidden border-l border-[#d9d9d9]">
      <div className="mx-auto mt-[3px] h-0.5 w-[68px] shrink-0 bg-[#9a9a9a]" />
      <div className="flex h-[38px] shrink-0 items-center pl-0.5">
        <TB name="house3d" w="w-[30px]" on />
        <Sep m="ml-1 mr-1.5" />
        <TB name="housebox" w="w-[30px]" /><TB name="layout" w="w-[30px]" /><TB name="publish" w="w-[30px]" />
        <button aria-label="Settings menu" className={clsx(BTN, 'ml-2.5 h-[21px] w-9 shrink-0 gap-1')}><Icon name="burger" className="size-3.5" /><Tri /></button>
      </div>
      <label className="ml-0.5 flex h-6 shrink-0 items-center border border-r-0 border-[#7a7a7a] bg-white px-1">
        <Icon name="search" className="size-4 opacity-70" />
        <input aria-label="Search Project Map" placeholder="Search Project Map" className="w-full min-w-0 pl-0.5 outline-none placeholder:text-[#666]" />
      </label>
      <div className="mt-0.5 flex min-h-0 grow">
        <ul className="min-w-0 grow overflow-hidden bg-white">
          {MAP.map(([icon, level, text], i) => (
            <li key={i} className={clsx('flex h-[22px] items-center whitespace-nowrap', INDENT[level], icon === 'bold' && 'bg-[#d6d6d6] font-bold')}>
              <span className={clsx('flex shrink-0', level === 3 ? 'w-[22px]' : 'w-[23px]')}>
                {icon === 'story' && <Icon name="story" className="-ml-px size-5" />}
                {icon === 'sheetgrid' && <Icon name="sheetgrid" className="size-[18px]" />}
              </span>
              {text}
            </li>
          ))}
        </ul>
        <div className="flex w-[13px] shrink-0 flex-col items-center">
          <div className="flex h-[65px] items-start pt-2"><Chevron /></div>
          <div className="h-[367px] w-full bg-[#cdcdcd]" />
          <div className="mt-auto pb-1.5"><Chevron turn="rotate-180" /></div>
        </div>
      </div>
      <div className="flex h-[15px] shrink-0 items-center pr-4 pl-1">
        <Chevron turn="-rotate-90" />
        <div className="ml-1 h-full w-[74px] bg-[#cdcdcd]" />
        <Chevron turn="rotate-90" className="ml-auto stroke-[#555]" />
      </div>
      <div className="flex h-[35px] shrink-0 items-center gap-[14px] pl-2.5">
        <button aria-label="New" className="opacity-40"><Icon name="addcircle" className="size-4" /></button>
        <button aria-label="Edit list"><Icon name="list" className="size-4" /></button>
        <button aria-label="Delete" className="opacity-50"><Icon name="remove" className="size-4" /></button>
      </div>
      <h3 className="ml-0.5 flex h-[22px] shrink-0 items-center gap-2.5 rounded-l-[3px] bg-[#d6d6d6] pl-1.5"><Tri dir="down" />Properties</h3>
      <div className="flex h-[26px] shrink-0 items-center pl-1"><Icon name="box3d" className="size-3.5" /><span className="pl-11 whitespace-nowrap">Generic Perspective</span></div>
      <button className={clsx(BTN, 'mb-[3px] ml-[3px] h-[21px] shrink-0')}>Settings...</button>
    </aside>
  )
}

const Swatch = ({ c }) => <i className="block h-[17px] w-full border border-black" style={{ background: c }} />

const RULES = [
  ['30 minutes', '#eedd39', '#eedd39'], ['60 minutes', '#f7a600', '#f7a600'], ['90 minutes', '#ff4d06', '#ff4d06'],
  ['120 minutes', '#bd3722', '#bd3722'], ['240 minutes', '#ca7174', '#ca7174'], ['Fire Compartmentation', '#776799', '#776799'],
  ['Glass Walls', '#000000', '#a1bcdb'],
  ['FLOOR TYPE'], ['Floor Type 01', null, '#9b6129'], ['Floor Type 02', null, '#6f4529'], ['Floor Type 03', null, '#453f34'],
  ['Floor Type 04', null, '#5c6c38'], ['Floor Type 05', null, '#60983a'],
  ['GROUPING'], ['Group 1', '#6f4529', '#6f4529'], ['Group 2', '#5c6c38', '#5c6c38'], ['Group 3', '#007aae', '#007aae'], ['Group 4', '#776799', '#776799'],
  ['LAYER MANAGEMENT'], ['Ceiling Layer (Sample)', '#bd3722', '#bd3722'],
  ['POSITION'], ['Exterior', '#60983a', '#60983a'], ['Interior', '#f7a600', '#f7a600'], ['Position Undefined', '#bd3722', '#bd3722'],
  ['QA'], ['Archicad Layer', '#bd3722', '#bd3722'], ['Invalid Height', '#834a7e', '#834a7e'], ['Inverted Height', '#834a7e', '#834a7e'],
]

function Sorter() {
  return <svg viewBox="0 0 8 10" className="mx-auto h-2.5 w-2" aria-hidden="true"><path d="M1 4l3-3 3 3zM1 6h6L4 9z" fill="#111" /></svg>
}

function RuleList() {
  return (
    <div className="flex min-h-0 grow">
      <div className="w-[303px] shrink-0 overflow-hidden bg-white">
        <table className="w-full table-fixed border-collapse">
          <colgroup><col className="w-6" /><col /><col className="w-10" /><col className="w-6" /><col className="w-6" /></colgroup>
          <thead>
            <tr className="h-[18px] text-left">
              <th className="border-r border-[#e3e3e3]" />
              <th className="border-r border-[#e3e3e3] pl-0.5 font-normal">Name</th>
              <th className="border-r border-[#e3e3e3] p-0"><Icon name="lines" className="mx-auto size-[15px]" /></th>
              <th className="border-r border-[#e3e3e3] p-0"><Icon name="hatch" className="mx-auto size-[15px]" /></th>
              <th className="border-r border-[#e3e3e3] p-0"><Icon name="brush" className="mx-auto size-[15px]" /></th>
            </tr>
          </thead>
          <tbody>
            {RULES.map(([name, a, b]) => {
              if (!b) {
                return (
                  <tr key={name} className="h-[21px] bg-[#f0f0f0] font-bold">
                    <td><Tri dir="down" className="mx-auto fill-[#333]" /></td>
                    <td colSpan="3" className="pl-0.5">{name}</td>
                    <td><button aria-label="Add rule" className="mx-auto flex"><Icon name="plus" className="size-4" /></button></td>
                  </tr>
                )
              }
              const sel = name === 'Glass Walls'
              return (
                <tr key={name} className={clsx('h-[21px]', sel && 'bg-[#0078d7] text-white')}>
                  <td className="p-0"><Sorter /></td>
                  <td className="p-0 pl-0.5">{name}</td>
                  <td className="p-0">{sel && <i className="mx-auto block h-px w-[35px] bg-white" />}</td>
                  <td className="p-px">{a && <Swatch c={a} />}</td>
                  <td className="p-px"><Swatch c={b} /></td>
                </tr>
              )
            })}
          </tbody>
        </table>
      </div>
      <div className="flex w-[17px] flex-col items-center pt-[23px]">
        <Chevron />
        <div className="mt-[284px] h-[152px] w-[15px] bg-[#cdcdcd]" />
        <div className="mt-auto pb-1"><Chevron turn="rotate-180" /></div>
      </div>
    </div>
  )
}

function Check({ label, checked, className }) {
  const id = useId()
  return (
    <div className={clsx('flex items-center gap-[3px]', className)}>
      <span className="grid">
        <input id={id} type="checkbox" defaultChecked={checked} className="peer size-[13px] appearance-none border border-[#333] bg-white [grid-area:1/1]" />
        <svg viewBox="0 0 13 13" fill="none" stroke="#222" strokeWidth="1.3" className="pointer-events-none invisible size-[13px] [grid-area:1/1] peer-checked:visible"><path d="M3 6l3 3 5-6" /></svg>
      </span>
      <label htmlFor={id}>{label}</label>
    </div>
  )
}

function Radio({ label, checked }) {
  return (
    <label className="flex h-5 items-center gap-1">
      <input type="radio" name="pens" defaultChecked={checked} className="size-[13px] appearance-none rounded-full border border-[#333] bg-white checked:bg-[#333] checked:shadow-[inset_0_0_0_2px_#fff]" />
      {label}
    </label>
  )
}

const SectionHead = ({ children }) => (
  <h3 className="flex h-[22px] shrink-0 items-center gap-[7px] rounded-[3px] bg-[#d6d6d6] pl-1.5 font-bold"><Tri dir="down" />{children}</h3>
)

function Pen({ kind }) {
  return (
    <div className="flex w-[104px] items-center justify-end">
      {kind === 'hatch' && <svg viewBox="0 0 14 14" className="mt-1 size-3.5 shrink-0" stroke={INK}><path d="M0 5l5-5M0 10L10 0M1 14L14 1M5 14l9-9M10 14l4-4" /></svg>}
      {kind === 'solid' && <i className="mt-1.5 size-3.5 shrink-0 bg-[#93989b]" />}
      <Icon name="pencil" className={kind ? 'mt-1 mr-1 size-[15px]' : 'mr-1.5 size-[18px]'} />
      <input aria-label="Pen" defaultValue="1" className={clsx(BOX, 'h-[23px] w-9 shrink-0')} />
      <button aria-label="Pen color" className={clsx(BTN, 'ml-[5px] h-[21px] w-8 shrink-0 justify-end gap-1.5 pr-[3px]')}>
        <i className="h-[15px] w-px bg-black" /><i className="h-[15px] w-[15px] rounded-[3px] bg-black" />
      </button>
    </div>
  )
}

function Fills() {
  return (
    <div className="flex shrink-0 items-center">
      <button aria-label="Drafting fills" className="flex w-[33px] justify-center"><Icon name="fillA" className="size-[18px]" /></button>
      <button aria-label="Cover fills" className="flex w-[30px] justify-center"><Icon name="fillB" className="size-[19px]" /></button>
      <button aria-label="Cut fills" className={clsx('flex h-[29px] w-[30px] items-center justify-center', ON)}><Icon name="fillC" className="size-[19px]" /></button>
    </div>
  )
}

function ColorMode({ icon }) {
  return (
    <div className="mr-[9px] flex items-center gap-[6px]">
      <button aria-label="By attribute" className={clsx('flex h-[29px] w-[30px] items-center justify-center', ON)}><Icon name={icon} className="size-[18px]" /></button>
      <button aria-label="By RGB">
        <svg viewBox="0 0 16 16" className="size-4" stroke="#222" strokeWidth="1">
          <path fill="#17a03e" d="M8 8V1a7 7 0 00-6 10.500z" /><path fill="#f04a28" d="M8 8V1a7 7 0 016 10.500z" /><path fill="#2f78dd" d="M8 8l-6 3.500a7 7 0 0012 0z" />
        </svg>
      </button>
    </div>
  )
}

const ROW = 'flex h-[35px] shrink-0 items-center justify-between'

function TitleBar({ title, dim }) {
  return (
    <header className="flex h-[30px] shrink-0 items-center bg-white pl-[9px]">
      {title && (
        <svg viewBox="0 0 14 14" className="mr-1.5 size-3.5" fill="none" stroke="#4a6fc4" strokeWidth="2"><path d="M1 12C2 8 5 2 8 2c3 0 4 1 4 3" /><path strokeDasharray="2 1" d="M12 5v5" /></svg>
      )}
      <h1 className="grow text-[11px]">{title}</h1>
      <button className={clsx('w-[45px] text-[12px]', dim && 'text-[#999]')}>?</button>
      <button aria-label="Close" className="flex w-[46px] justify-center">
        <svg viewBox="0 0 12 12" className="size-[11px]" stroke={dim ? '#999' : '#111'} strokeWidth="1.1"><path d="M1 1l10 10M11 1L1 11" /></svg>
      </button>
    </header>
  )
}

const Grip = () => (
  <svg viewBox="0 0 10 10" className="absolute right-0.5 bottom-0.5 size-2.5" fill="#bdbdbd"><path d="M7 0h2v2H7zM7 4h2v2H7zM7 8h2v2H7zM3 4h2v2H3zM3 8h2v2H3zM0 8h1v2H0z" /></svg>
)

function RulesDialog() {
  return (
    <div role="dialog" className="absolute top-[163px] left-[408px] flex h-[713px] w-[927px] flex-col border border-[#6c706f] bg-[#f0f0f0] shadow-[0_8px_24px_rgba(0,0,0,0.35)]">
      <TitleBar title="Graphic Override Rules" />
      <div className="flex min-h-0 grow">
        <div className="flex w-[340px] shrink-0 flex-col py-2.5 pl-2.5">
          <label className="flex h-[23px] w-80 shrink-0 items-center border border-[#7a7a7a] bg-white px-1">
            <Icon name="search" className="size-4 opacity-70" />
            <input aria-label="Search rules" placeholder="Search Graphic Override Rules" className="grow pl-0.5 outline-none placeholder:text-[#666]" />
          </label>
          <div className="h-[7px] shrink-0" />
          <RuleList />
          <div className="mt-2.5 mb-px flex w-80 shrink-0 gap-3 pl-px">
            <button className={clsx(BTN, 'h-[21px] grow gap-1.5')}><Icon name="addcircle" className="size-[15px]" />New</button>
            {['folderadd', 'dupe', 'rename', 'remove'].map((n) => (
              <button key={n} aria-label={n} className={clsx(BTN, 'h-[21px] w-[43px]')}><Icon name={n} className="size-4" /></button>
            ))}
          </div>
        </div>
        <div className="w-[5px] shrink-0 bg-[#f8f8f8] pt-[3px]"><Tri dir="left" className="-ml-0.5 fill-[#222]" /></div>
        <div className="flex min-w-0 grow flex-col pr-[14px] pl-[15px]">
          <div className="flex h-[35px] shrink-0 items-end justify-between pb-[5px]"><label htmlFor="rule">Name:</label><span>Editable: 1</span></div>
          <input id="rule" defaultValue="Glass Walls" className={clsx(BOX, 'mb-2.5 h-[23px] shrink-0')} />
          <SectionHead>CRITERIA</SectionHead>
          <div className="mt-[5px] flex h-[130px] shrink-0">
            <div className="grow bg-white">
              <table className="w-full table-fixed border-collapse">
                <colgroup><col className="w-[135px]" /><col className="w-[58px]" /><col /></colgroup>
                <thead>
                  <tr className="h-[18px] text-left">
                    <th className="border-r border-[#e3e3e3] p-0 pl-[3px] font-normal">Criteria</th>
                    <th className="border-r border-[#e3e3e3]" />
                    <th className="border-r border-[#e3e3e3] p-0 pl-[3px] font-normal">Value</th>
                  </tr>
                </thead>
                <tbody>
                  <tr className="h-[21px] bg-[#0078d7] text-white">
                    <td className="p-0 pl-[3px]">Element Type</td>
                    <td className="p-0"><button className={clsx(BTN, 'h-[17px] w-[56px] pr-0.5 pl-[5px] text-black')}><span className="grow text-left leading-[15px]">is</span><Tri /></button></td>
                    <td className="p-0">
                      <div className="flex items-center">
                        <svg viewBox="0 0 20 17" className="ml-0.5 h-[17px] w-5 shrink-0" fill="none" stroke="#12395e"><path d="M1 3l17-2v11L1 16z" /></svg>
                        <span className="w-[226px] pl-[5px]">Wall</span>
                        <button aria-label="Choose value" className={clsx(BTN, 'size-4 shrink-0')}><Tri /></button>
                      </div>
                    </td>
                  </tr>
                </tbody>
              </table>
            </div>
            <div className="flex w-[18px] shrink-0 flex-col items-center justify-between pt-[22px] pb-1"><Chevron className="stroke-[#bbb]" /><Chevron turn="rotate-180" className="stroke-[#bbb]" /></div>
          </div>
          <div className="flex shrink-0 gap-3 pt-[11px] pb-2 pl-px">
            <button className={clsx(BTN, 'h-[21px] w-[118px] pr-px')}><span className="grow pl-2 text-center">Add...</span><Tri /></button>
            <button disabled className="h-[21px] w-[118px] border border-[#bfbfbf] bg-[#cccccc] text-[#838383]">Remove</button>
          </div>
          <SectionHead>OVERRIDE STYLE</SectionHead>
          <div className="h-0.5 shrink-0" />
          <div className={ROW}>
            <Check label="Line Type:" checked />
            <button className={clsx(BTN, 'mr-24 h-7 w-[193px] pr-0.5 pl-[3px]')}>
              <span className="flex grow flex-col pr-1 text-left leading-3">Solid Line<i className="mt-[5px] mb-2 h-px bg-black" /></span><Tri />
            </button>
          </div>
          <div className={ROW}>
            <Check label="Line / Marker / Text Pen:" checked />
            <div className="mt-1 mr-24"><Pen /></div>
          </div>
          <div className={ROW}>
            <Check label="Fill Type:" checked className="grow" />
            <button className={clsx(BTN, 'mr-[3px] h-7 w-[193px] gap-1 pr-0.5 pl-[3px]')}>
              <svg viewBox="0 0 24 22" className="h-[22px] w-6" stroke="#000"><path fill="#fff" d="M.5.500h23v21H.5z" /><path d="M1 5l4-4M1 10l9-9M1 15L15 1M1 20L20 1M4 21L23 3M9 21L23 8M14 21l9-8M19 21l4-4" /></svg>
              <span className="grow text-left whitespace-nowrap">Brick - Common Cut Fill</span><Tri />
            </button>
            <Fills />
          </div>
          <div className="flex h-[29px] shrink-0 items-center pl-[15px]"><Check label="Hide Skin Separators" /></div>
          <div className={ROW}>
            <Check label="Fill Foreground Pen:" checked className="grow" />
            <div className="mr-[3px] flex justify-end"><Pen kind="hatch" /></div>
            <Fills />
          </div>
          <div className={ROW}>
            <Check label="Fill Background Pen:" checked className="grow" />
            <ColorMode icon="pencil" />
            <div className="mr-[3px] flex w-[193px] justify-end"><Pen kind="solid" /></div>
            <Fills />
          </div>
          <div className="flex h-[53px] shrink-0 items-center justify-between">
            <span>Pens / Colors:</span>
            <div className="w-[290px] pb-0.5"><Radio label="Override pen color only" /><Radio label="Override pen color and thickness" checked /></div>
          </div>
          <hr className="mb-2.5 border-[#a0a0a0]" />
          <div className={ROW}>
            <Check label="Surface:" checked className="grow" />
            <ColorMode icon="brush" />
            <button className={clsx(BTN, 'h-7 w-[193px] gap-1 pr-0.5 pl-[3px]')}>
              <i className="h-5 w-5 border border-black bg-[#a1bcdb]" /><span className="grow text-left">Glass - Blue</span><Tri />
            </button>
            <div className="ml-9 flex">
              {['surfA', 'surfB'].map((n) => <button key={n} aria-label={n} className={clsx('flex h-[29px] w-[30px] items-center justify-center', ON)}><Icon name={n} /></button>)}
            </div>
          </div>
          <div className="flex h-[33px] shrink-0 items-center justify-between">
            <Check label="Hide Model Contours:" />
            <div className="flex gap-0.5 pr-px">
              {['hideA', 'hideB'].map((n) => <button key={n} disabled aria-label={n} className="flex size-7 items-center justify-center border border-[#bfbfbf] bg-[#cccccc]"><Icon name={n} /></button>)}
            </div>
          </div>
          <hr className="mt-2.5 border-[#a0a0a0]" />
          <div className="flex justify-end gap-3 pt-[13px] pr-px">
            <button className={clsx(BTN, 'h-[21px] w-[88px]')}>Cancel</button>
            <button className="h-[21px] w-[88px] border-2 border-[#0078d7] bg-[#e1e1e1] leading-4">OK</button>
          </div>
        </div>
      </div>
      <Grip />
    </div>
  )
}

const APPLIED = [...RULES.slice(0, 5), RULES[6]]

function CombinationsDialog() {
  return (
    <div role="dialog" className="absolute top-[250px] left-[1290px] flex h-[489px] w-[515px] flex-col border border-[#9a9a9a] bg-[#f0f0f0] shadow-[0_6px_18px_rgba(0,0,0,0.3)]">
      <TitleBar dim />
      <div className="flex grow flex-col pr-[15px] pl-[17px]">
        <label htmlFor="combo" className="pt-[14px] pb-1 leading-4">Name:</label>
        <input id="combo" defaultValue="46-Fire strategy" className={clsx(BOX, 'h-[23px]')} />
        <p className="pt-[11px] pb-1 leading-4">Order of rules to be applied:</p>
        <div className="flex h-[279px] shrink-0">
          <div className="grow bg-white">
            <table className="w-full table-fixed border-collapse">
              <colgroup><col className="w-[18px]" /><col /><col className="w-10" /><col className="w-6" /><col className="w-6" /><col className="w-8" /></colgroup>
              <thead>
                <tr className="h-[18px] text-left">
                  <th />
                  <th className="border-r border-[#e3e3e3] p-0 pl-1 font-normal">Name</th>
                  {['lines', 'hatch', 'brush'].map((n) => <th key={n} className="border-r border-[#e3e3e3] p-0"><Icon name={n} className="mx-auto size-[15px]" /></th>)}
                  <th className="border-r border-[#e3e3e3]" />
                </tr>
              </thead>
              <tbody>
                {APPLIED.map(([name, a, b]) => {
                  const sel = name === 'Glass Walls'
                  return (
                    <tr key={name} className={clsx('h-[21px]', sel && 'bg-[#0078d7] text-white')}>
                      <td className="p-0"><Sorter /></td>
                      <td className="p-0 pl-1">{name}</td>
                      <td className="p-0">{sel && <i className="mx-auto block h-px w-[35px] bg-white" />}</td>
                      <td className="p-px"><Swatch c={a} /></td>
                      <td className="p-px"><Swatch c={b} /></td>
                      <td className="p-px">{sel && <button className="block h-[17px] w-full border border-white bg-[#e1e1e1] text-[10px] leading-3 text-black">...</button>}</td>
                    </tr>
                  )
                })}
              </tbody>
            </table>
            <hr className="mt-[9px] mr-0.5 border-[#a0a0a0]" />
            <p className="pt-3.5 pl-[19px] text-[#a0a0a0]">Rules applied by Renovation Filter</p>
          </div>
          <div className="flex w-4 shrink-0 flex-col items-center justify-between pt-6 pb-1"><Chevron className="stroke-[#bbb]" /><Chevron turn="rotate-180" className="stroke-[#bbb]" /></div>
        </div>
        <div className="flex items-center gap-3 pt-[11px] pb-[13px]">
          <button aria-label="Add" className={clsx(BTN, 'h-[21px] w-[46px] justify-end pr-px')}><Tri /></button>
          <button aria-label="New rule" className={clsx(BTN, 'h-[21px] w-[43px]')}><Icon name="paragraph" className="size-[18px]" /></button>
          <button aria-label="Remove" className={clsx(BTN, 'h-[21px] w-[43px]')}><Icon name="remove" className="size-4" /></button>
          <button className={clsx(BTN, 'ml-auto h-[21px] w-[188px]')}>Manage Rules...</button>
        </div>
        <hr className="border-[#a0a0a0]" />
        <div className="flex justify-end gap-3 pt-3">
          <button className={clsx(BTN, 'h-[21px] w-[88px]')}>Cancel</button>
          <button className={clsx(BTN, 'h-[21px] w-[88px]')}>OK</button>
        </div>
      </div>
      <Grip />
    </div>
  )
}

function Callout() {
  return (
    <>
      <svg className="pointer-events-none absolute top-[310px] left-[715px] h-[85px] w-[55px]" viewBox="715 310 55 85"><path d="M722 389L763 318" stroke="#ff7f27" strokeWidth="4" /></svg>
      <div className="pointer-events-none absolute top-[295px] left-[761px] h-[52px] w-[550px] border-[5px] border-[#ff7f27]" />
    </>
  )
}

export default function App() {
  return (
    <div className="relative flex h-screen flex-col overflow-hidden bg-[#f0f0f0] font-['Open_Sans',sans-serif] text-[11px] leading-4 text-black">
      <MenuBar />
      <Toolbar />
      <InfoBox />
      <div className="flex min-h-0 grow pt-0.5">
        <Toolbox />
        <div className="flex min-w-0 grow flex-col">
          <TabBar />
          <Canvas />
          <QuickOptions />
        </div>
        <Navigator />
      </div>
      <footer className="flex h-[22px] shrink-0 items-center border-t border-[#d9d9d9]">
        <span className="grow">Click on a Wall to Place Door Centerpoint.</span>
        <Icon name="stack" className="mr-1 size-4" />
        <a href="#id" className="flex h-full items-center border-x border-[#d9d9d9] px-[14px] font-['Lato',sans-serif] text-[14px]">GRAPHISOFT&nbsp;<span className="font-light">ID</span></a>
        <div className="w-4" />
      </footer>
      <CombinationsDialog />
      <RulesDialog />
      <Callout />
    </div>
  )
}
